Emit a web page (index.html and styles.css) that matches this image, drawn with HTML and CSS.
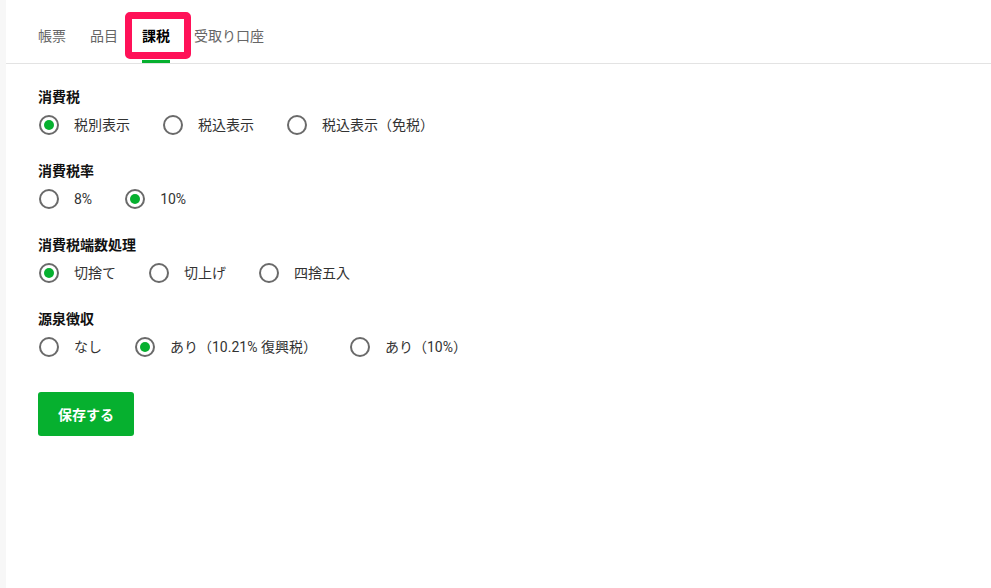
FILE: index.html
```html
<!DOCTYPE html>
<html lang="ja">
<head>
<meta charset="utf-8">
<title>課税</title>
<link rel="stylesheet" href="styles.css">
</head>
<body>
<div class="strip"></div>
<main class="main">
  <nav class="tabs">
    <div class="tab">帳票</div>
    <div class="tab">品目</div>
    <div class="tab active">課税<span class="highlight"></span></div>
    <div class="tab">受取り口座</div>
  </nav>
  <div class="content">
    <section class="group">
      <h2 class="title">消費税</h2>
      <div class="options">
        <label class="opt"><span class="radio on"></span><span class="lbl">税別表示</span></label>
        <label class="opt"><span class="radio"></span><span class="lbl">税込表示</span></label>
        <label class="opt"><span class="radio"></span><span class="lbl">税込表示（免税）</span></label>
      </div>
    </section>
    <section class="group">
      <h2 class="title">消費税率</h2>
      <div class="options">
        <label class="opt"><span class="radio"></span><span class="lbl">8%</span></label>
        <label class="opt"><span class="radio on"></span><span class="lbl">10%</span></label>
      </div>
    </section>
    <section class="group">
      <h2 class="title">消費税端数処理</h2>
      <div class="options">
        <label class="opt"><span class="radio on"></span><span class="lbl">切捨て</span></label>
        <label class="opt"><span class="radio"></span><span class="lbl">切上げ</span></label>
        <label class="opt"><span class="radio"></span><span class="lbl">四捨五入</span></label>
      </div>
    </section>
    <section class="group">
      <h2 class="title">源泉徴収</h2>
      <div class="options">
        <label class="opt"><span class="radio"></span><span class="lbl">なし</span></label>
        <label class="opt"><span class="radio on"></span><span class="lbl">あり（10.21% 復興税）</span></label>
        <label class="opt"><span class="radio"></span><span class="lbl">あり（10%）</span></label>
      </div>
    </section>
    <button class="save">保存する</button>
  </div>
</main>
</body>
</html>
```

FILE: styles.css
```css
html, body {
  margin: 0;
  padding: 0;
  background: #ffffff;
}
body {
  display: flex;
  min-height: 588px;
  font-family: Roboto, "Noto Sans CJK JP", sans-serif;
  font-size: 14px;
  color: #222;
}
.strip {
  width: 6px;
  background: #f7f7f7;
  flex: none;
}
.main {
  flex: 1;
}
.tabs {
  display: flex;
  height: 63px;
  border-bottom: 1px solid #e3e3e3;
  padding-left: 20px;
}
.tab {
  position: relative;
  padding: 26px 12px 0;
  line-height: 20px;
  color: #666;
}
.tab.active {
  color: #000;
  font-weight: 700;
}
.tab.active::after {
  content: "";
  position: absolute;
  left: 12px;
  right: 12px;
  bottom: 0;
  height: 3px;
  background: #06b02f;
}
.highlight {
  position: absolute;
  left: -5px;
  top: 12px;
  width: 66px;
  height: 47px;
  box-sizing: border-box;
  border: 7px solid #ff1158;
  border-radius: 5px;
}
.content {
  padding: 23px 0 0 32px;
}
.group {
  margin-bottom: 26px;
}
.title {
  margin: 0;
  font-size: 14px;
  font-weight: 700;
  line-height: 20px;
  color: #111;
}
.options {
  display: flex;
  margin-top: 8px;
  height: 20px;
  align-items: center;
}
.opt {
  display: flex;
  align-items: center;
  margin-right: 32px;
  line-height: 20px;
  color: #333;
}
.radio {
  width: 20px;
  height: 20px;
  box-sizing: border-box;
  border: 2px solid #6a6a6a;
  border-radius: 50%;
  display: flex;
  align-items: center;
  justify-content: center;
  margin-right: 15px;
  margin-left: 1px;
}
.radio.on::before {
  content: "";
  width: 10px;
  height: 10px;
  border-radius: 50%;
  background: #06b02f;
}
.save {
  margin-top: 9px;
  width: 96px;
  height: 44px;
  border: none;
  border-radius: 3px;
  background: #06b02f;
  color: #fff;
  font-family: inherit;
  font-size: 14px;
  font-weight: 700;
}
```
